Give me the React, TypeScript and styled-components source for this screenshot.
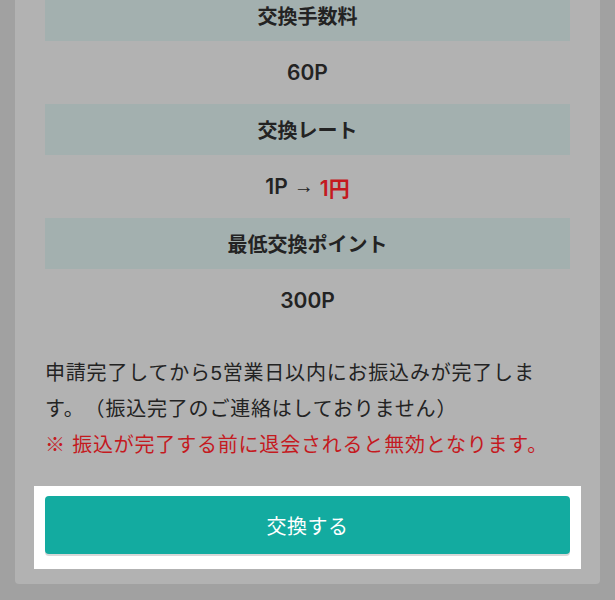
import styled, { createGlobalStyle } from "styled-components";

const GlobalStyle = createGlobalStyle`
  html, body {
    margin: 0;
    padding: 0;
    background: #a1a1a1;
  }
  body {
    font-family: "Liberation Sans", "Noto Sans CJK JP", sans-serif;
    color: #232323;
    text-spacing-trim: space-all;
  }
`;

const Page = styled.div`
  padding: 0 15px 16px;
  margin-top: -10px;
`;

const Card = styled.section`
  background: #b2b2b2;
  border-radius: 0 0 4px 4px;
  padding: 0 30px 15px;
`;

const InfoList = styled.dl`
  margin: 0;
`;

const Label = styled.dt`
  height: 51px;
  display: flex;
  align-items: center;
  justify-content: center;
  background: #a3b0af;
  font-size: 20px;
  font-weight: 700;
`;

const Value = styled.dd`
  margin: 0;
  height: 63px;
  display: flex;
  align-items: center;
  justify-content: center;
  font-family: Inter, "Noto Sans CJK JP", sans-serif;
  font-size: 21px;
  font-weight: 600;
`;

const Arrow = styled.span`
  font-family: "Liberation Sans", sans-serif;
  font-weight: 400;
  font-size: 20px;
  margin: 0 6px;
`;

const Yen = styled.span`
  color: #c41a1f;
`;

const Note = styled.p`
  margin: 23px 0 0;
  font-size: 20px;
  line-height: 36px;
  letter-spacing: 0.8px;
  line-break: strict;
`;

const Warning = styled.span`
  display: block;
  color: #c41a1f;
`;

const Spotlight = styled.div`
  margin: 23px -11px 0;
  padding: 10px 11px 15px;
  background: #ffffff;
`;

const SubmitButton = styled.button`
  display: block;
  box-sizing: border-box;
  width: 100%;
  height: 58px;
  padding: 0;
  border: none;
  border-radius: 4px;
  background: #13aba0;
  box-shadow: 0 2px 0 #d8d8d8;
  color: #ffffff;
  font-family: "Liberation Sans", "Noto Sans CJK JP", sans-serif;
  font-size: 20px;
  letter-spacing: 0.5px;
  cursor: pointer;
`;

const items = [
  { label: "交換手数料", value: <>60P</> },
  {
    label: "交換レート",
    value: (
      <>
        1P<Arrow>→</Arrow>
        <Yen>1円</Yen>
      </>
    ),
  },
  { label: "最低交換ポイント", value: <>300P</> },
];

export default function App() {
  return (
    <>
      <GlobalStyle />
      <Page>
        <Card>
          <InfoList>
            {items.map((item) => (
              <div key={item.label}>
                <Label>{item.label}</Label>
                <Value>{item.value}</Value>
              </div>
            ))}
          </InfoList>
          <Note>
            申請完了してから5営業日以内にお振込みが完了します。（振込完了のご連絡はしておりません）
            <Warning>※ 振込が完了する前に退会されると無効となります。</Warning>
          </Note>
          <Spotlight>
            <SubmitButton type="button">交換する</SubmitButton>
          </Spotlight>
        </Card>
      </Page>
    </>
  );
}
